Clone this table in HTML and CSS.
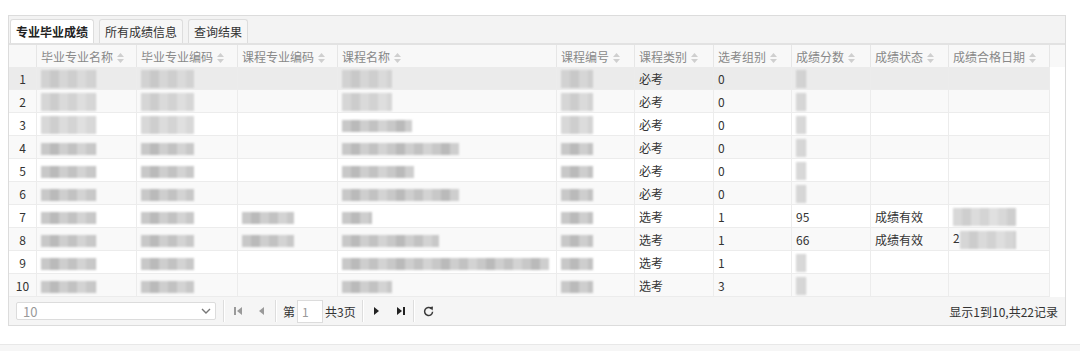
FILE: index.html
```html
<!DOCTYPE html>
<html lang="zh-CN">
<head>
<meta charset="utf-8">
<title>成绩</title>
<link rel="stylesheet" href="styles.css">
</head>
<body>
<div class="page">
  <div class="panel">
    <div class="tabs">
      <div class="tab active">专业毕业成绩</div>
      <div class="tab">所有成绩信息</div>
      <div class="tab">查询结果</div>
    </div>

    <div class="grid-head">
      <table class="grid">
        <colgroup>
          <col class="c-no"><col class="c-100"><col class="c-101"><col class="c-100"><col class="c-219"><col class="c-78"><col class="c-79"><col class="c-78"><col class="c-79"><col class="c-78"><col class="c-101">
        </colgroup>
        <tr>
          <th></th>
          <th>毕业专业名称<svg class="sort" width="7" height="10" viewBox="0 0 7 10"><path d="M3.5 0L7 4H0Z M3.5 10L0 6H7Z"/></svg></th>
          <th>毕业专业编码<svg class="sort" width="7" height="10" viewBox="0 0 7 10"><path d="M3.5 0L7 4H0Z M3.5 10L0 6H7Z"/></svg></th>
          <th>课程专业编码<svg class="sort" width="7" height="10" viewBox="0 0 7 10"><path d="M3.5 0L7 4H0Z M3.5 10L0 6H7Z"/></svg></th>
          <th>课程名称<svg class="sort" width="7" height="10" viewBox="0 0 7 10"><path d="M3.5 0L7 4H0Z M3.5 10L0 6H7Z"/></svg></th>
          <th>课程编号<svg class="sort" width="7" height="10" viewBox="0 0 7 10"><path d="M3.5 0L7 4H0Z M3.5 10L0 6H7Z"/></svg></th>
          <th>课程类别<svg class="sort" width="7" height="10" viewBox="0 0 7 10"><path d="M3.5 0L7 4H0Z M3.5 10L0 6H7Z"/></svg></th>
          <th>选考组别<svg class="sort" width="7" height="10" viewBox="0 0 7 10"><path d="M3.5 0L7 4H0Z M3.5 10L0 6H7Z"/></svg></th>
          <th>成绩分数<svg class="sort" width="7" height="10" viewBox="0 0 7 10"><path d="M3.5 0L7 4H0Z M3.5 10L0 6H7Z"/></svg></th>
          <th>成绩状态<svg class="sort" width="7" height="10" viewBox="0 0 7 10"><path d="M3.5 0L7 4H0Z M3.5 10L0 6H7Z"/></svg></th>
          <th>成绩合格日期<svg class="sort" width="7" height="10" viewBox="0 0 7 10"><path d="M3.5 0L7 4H0Z M3.5 10L0 6H7Z"/></svg></th>
        </tr>
      </table>
    </div>

    <div class="grid-body">
      <table class="grid">
        <colgroup>
          <col class="c-no"><col class="c-100"><col class="c-101"><col class="c-100"><col class="c-219"><col class="c-78"><col class="c-79"><col class="c-78"><col class="c-79"><col class="c-78"><col class="c-101">
        </colgroup>
        <tr class="hover">
          <td class="no">1</td>
          <td><span class="blur w55 faint"></span></td>
          <td><span class="blur w53 faint"></span></td>
          <td></td>
          <td><span class="blur w50 faint"></span></td>
          <td><span class="blur w32 faint"></span></td>
          <td>必考</td><td>0</td>
          <td><span class="blur w10 faint"></span></td>
          <td></td><td></td>
        </tr>
        <tr>
          <td class="no">2</td>
          <td><span class="blur w55 faint"></span></td>
          <td><span class="blur w53 faint"></span></td>
          <td></td>
          <td><span class="blur w50 faint"></span></td>
          <td><span class="blur w32 faint"></span></td>
          <td>必考</td><td>0</td>
          <td><span class="blur w10 faint"></span></td>
          <td></td><td></td>
        </tr>
        <tr>
          <td class="no">3</td>
          <td><span class="blur w55 faint"></span></td>
          <td><span class="blur w53 faint"></span></td>
          <td></td>
          <td><span class="blur w70"></span></td>
          <td><span class="blur w32 faint"></span></td>
          <td>必考</td><td>0</td>
          <td><span class="blur w10 faint"></span></td>
          <td></td><td></td>
        </tr>
        <tr>
          <td class="no">4</td>
          <td><span class="blur w55"></span></td>
          <td><span class="blur w53"></span></td>
          <td></td>
          <td><span class="blur w117"></span></td>
          <td><span class="blur w32"></span></td>
          <td>必考</td><td>0</td>
          <td><span class="blur w10 faint"></span></td>
          <td></td><td></td>
        </tr>
        <tr>
          <td class="no">5</td>
          <td><span class="blur w55"></span></td>
          <td><span class="blur w53"></span></td>
          <td></td>
          <td><span class="blur w72"></span></td>
          <td><span class="blur w32"></span></td>
          <td>必考</td><td>0</td>
          <td><span class="blur w10 faint"></span></td>
          <td></td><td></td>
        </tr>
        <tr>
          <td class="no">6</td>
          <td><span class="blur w55"></span></td>
          <td><span class="blur w53"></span></td>
          <td></td>
          <td><span class="blur w117"></span></td>
          <td><span class="blur w32"></span></td>
          <td>必考</td><td>0</td>
          <td><span class="blur w10 faint"></span></td>
          <td></td><td></td>
        </tr>
        <tr>
          <td class="no">7</td>
          <td><span class="blur w55"></span></td>
          <td><span class="blur w53"></span></td>
          <td><span class="blur w52"></span></td>
          <td><span class="blur w30"></span></td>
          <td><span class="blur w32"></span></td>
          <td>选考</td><td>1</td><td>95</td><td>成绩有效</td>
          <td><span class="blur w63 faint"></span></td>
        </tr>
        <tr>
          <td class="no">8</td>
          <td><span class="blur w55"></span></td>
          <td><span class="blur w53"></span></td>
          <td><span class="blur w52"></span></td>
          <td><span class="blur w97"></span></td>
          <td><span class="blur w32"></span></td>
          <td>选考</td><td>1</td><td>66</td><td>成绩有效</td>
          <td>2<span class="blur w56 faint"></span></td>
        </tr>
        <tr>
          <td class="no">9</td>
          <td><span class="blur w55"></span></td>
          <td><span class="blur w53"></span></td>
          <td></td>
          <td><span class="blur w207"></span></td>
          <td><span class="blur w32"></span></td>
          <td>选考</td><td>1</td>
          <td><span class="blur w10 faint"></span></td>
          <td></td><td></td>
        </tr>
        <tr>
          <td class="no">10</td>
          <td><span class="blur w55"></span></td>
          <td><span class="blur w53"></span></td>
          <td></td>
          <td><span class="blur w50"></span></td>
          <td><span class="blur w32"></span></td>
          <td>选考</td><td>3</td>
          <td><span class="blur w10 faint"></span></td>
          <td></td><td></td>
        </tr>
      </table>
    </div>

    <div class="pager">
      <div class="select">
        <span class="select-value">10</span>
        <svg width="10" height="6" viewBox="0 0 10 6"><path d="M1 1L5 5L9 1" fill="none" stroke="#777" stroke-width="1.4"/></svg>
      </div>
      <span class="sep"></span>
      <span class="btn first"><svg width="8" height="10" viewBox="0 0 8 10"><rect x="0" y="1" width="2" height="8"/><path d="M8 1L3 5L8 9Z"/></svg></span>
      <span class="btn prev"><svg width="6" height="10" viewBox="0 0 6 10"><path d="M6 1L1 5L6 9Z"/></svg></span>
      <span class="sep sep-b"></span>
      <span class="label">第</span>
      <span class="page-input">1</span>
      <span class="label total">共3页</span>
      <span class="sep sep-c"></span>
      <span class="btn next"><svg width="6" height="10" viewBox="0 0 6 10"><path d="M0 1L5 5L0 9Z"/></svg></span>
      <span class="btn last"><svg width="8" height="10" viewBox="0 0 8 10"><path d="M0 1L5 5L0 9Z"/><rect x="6" y="1" width="2" height="8"/></svg></span>
      <span class="sep sep-d"></span>
      <span class="btn refresh"><svg width="11" height="11" viewBox="0 0 11 11"><path d="M8.4 2.6A4 4 0 1 0 9.6 5.8" fill="none" stroke="#3a3a3a" stroke-width="1.5"/><path d="M6 1.2L10 0.6L9.6 4.6Z" fill="#3a3a3a"/></svg></span>
      <span class="info">显示1到10,共22记录</span>
    </div>
  </div>
</div>
<div class="footer-band"></div>
</body>
</html>
```

FILE: styles.css
```css
* { box-sizing: border-box; }

body {
  margin: 0;
  font-family: "Noto Sans CJK SC", "Microsoft YaHei", sans-serif;
  font-size: 12px;
  color: #333;
  background: #fff;
}

.page {
  height: 344px;
  padding: 15px 14px 0 8px;
}

.panel {
  height: 311px;
  border: 1px solid #dcdcdc;
  display: flex;
  flex-direction: column;
}

/* tabs */
.tabs {
  height: 29px;
  display: flex;
  align-items: flex-end;
  gap: 5px;
  padding-left: 1px;
  background: #f3f3f3;
  border-bottom: 2px solid #e2e2e2;
}

.tab {
  height: 24px;
  line-height: 23px;
  padding: 0 5px;
  border: 1px solid #dddddd;
  border-bottom: none;
  border-radius: 3px 3px 0 0;
  background: #f6f6f6;
  color: #333;
}

.tab.active {
  background: #fff;
  font-weight: 700;
  color: #222;
}

/* grid */
.grid {
  table-layout: fixed;
  width: 1041px;
  border-collapse: separate;
  border-spacing: 0;
}

.c-no { width: 28px; }
.c-100 { width: 100px; }
.c-101 { width: 101px; }
.c-219 { width: 219px; }
.c-78 { width: 78px; }
.c-79 { width: 79px; }

.grid-head {
  height: 22px;
  background: #f8f8f8;
}

.grid th {
  height: 22px;
  padding: 0 4px;
  border-right: 1px solid #e6e6e6;
  font-weight: normal;
  color: #888888;
  text-align: left;
  white-space: nowrap;
  overflow: hidden;
}

.sort {
  margin-left: 4px;
  vertical-align: -1px;
  fill: #cfcfcf;
}

.grid td {
  height: 23px;
  padding: 0 4px;
  border-right: 1px solid #ececec;
  border-bottom: 1px solid #ececec;
  white-space: nowrap;
  overflow: hidden;
  vertical-align: middle;
  color: #333;
}

.grid td.no {
  text-align: center;
  padding: 0;
}

.grid tr:nth-child(even) td { background: #f9f9f9; }
.grid tr.hover td { background: #ebebeb; }

/* blurred (masked) values */
.blur {
  display: inline-block;
  height: 12px;
  vertical-align: middle;
  background: repeating-linear-gradient(90deg,
    #c8c8c8 0 9px, #bababa 9px 18px, #cecece 18px 27px,
    #c2c2c2 27px 36px, #d3d3d3 36px 45px);
  filter: blur(0.8px);
}

.blur.faint {
  height: 18px;
  opacity: 0.7;
}

.w10 { width: 10px; }
.w30 { width: 30px; }
.w32 { width: 32px; }
.w50 { width: 50px; }
.w52 { width: 52px; }
.w53 { width: 53px; }
.w55 { width: 55px; }
.w56 { width: 56px; }
.w63 { width: 63px; }
.w70 { width: 70px; }
.w72 { width: 72px; }
.w97 { width: 97px; }
.w117 { width: 117px; }
.w207 { width: 207px; }

/* pager */
.pager {
  height: 28px;
  display: flex;
  align-items: center;
  padding: 0 7px;
  background: #f5f5f5;
}

.select {
  width: 200px;
  height: 18px;
  display: flex;
  align-items: center;
  justify-content: space-between;
  padding: 0 4px 0 6px;
  background: #fff;
  border: 1px solid #dcdcdc;
  border-radius: 2px;
}

.select-value { color: #999; font-size: 13px; }

.sep {
  width: 2px;
  height: 22px;
  margin-left: 7px;
  border-left: 1px solid #dddddd;
  border-right: 1px solid #ffffff;
}

.sep-b { margin-left: 11px; }
.sep-c { margin-left: 6px; }
.sep-d { margin-left: 8px; }

.btn {
  display: flex;
  align-items: center;
}

.btn.first { margin-left: 9px; fill: #9a9a9a; }
.btn.prev { margin-left: 16px; fill: #9a9a9a; }
.btn.next { margin-left: 10px; fill: #222; }
.btn.last { margin-left: 17px; fill: #222; }
.btn.refresh { margin-left: 8px; }

.label { margin-left: 6px; color: #333; }
.label.total { margin-left: 2px; }

.page-input {
  width: 26px;
  height: 23px;
  margin-left: 2px;
  padding-left: 4px;
  line-height: 21px;
  color: #999;
  background: #fff;
  border: 1px solid #dcdcdc;
}

.info {
  margin-left: auto;
  color: #333;
}

.footer-band {
  height: 7px;
  border-top: 1px solid #e8e8e8;
  background: #f6f6f6;
}
```
